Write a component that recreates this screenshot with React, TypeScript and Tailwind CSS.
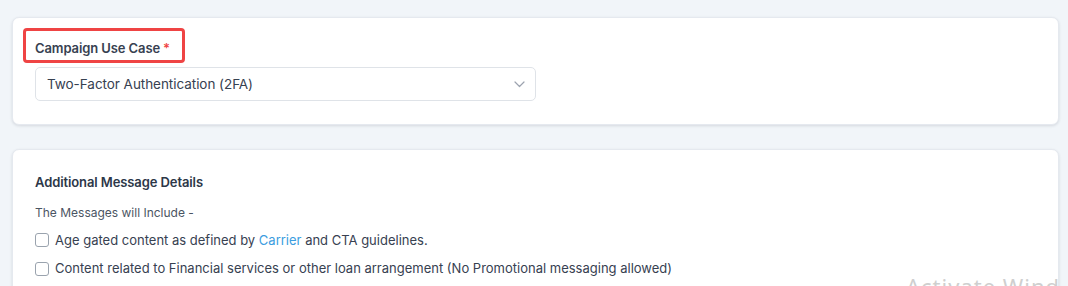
import React from "react";

export default function App() {
  return (
    <div
      className="relative w-[1068px] h-[286px] overflow-hidden bg-[#f1f5f9] pt-[17px] pl-[12px] pr-[9px]"
      style={{ fontFamily: "Inter, 'Noto Sans', sans-serif" }}
    >
      <div className="flex flex-col gap-[24px]">
        <div className="h-[108px] rounded-[7px] bg-white shadow-[0_1px_3px_rgba(15,23,42,0.12)] border border-[#e5e9ef] pt-[10px] pl-[10px]">
          <div className="inline-flex items-center w-[162px] h-[35px] rounded-[4px] border-[3px] border-[#ef4444] pl-[9px] pt-[7px]">
            <span className="text-[13px] font-semibold text-[#374151] tracking-[-0.1px]">
              Campaign Use Case
            </span>
            <span className="ml-[3px] text-[13px] text-[#ef4444] font-semibold">*</span>
          </div>
          <div className="mt-[4px] ml-[12px] w-[501px] h-[34px] rounded-[5px] border border-[#dfe3e8] flex items-center justify-between pl-[11px] pr-[10px]">
            <span className="text-[13.5px] text-[#374151] tracking-[-0.05px]">Two-Factor Authentication (2FA)</span>
            <svg width="11" height="7" viewBox="0 0 11 7" fill="none">
              <path d="M1 1l4.5 4.5L10 1" stroke="#9ca3af" strokeWidth="1.2" strokeLinecap="round" strokeLinejoin="round" />
            </svg>
          </div>
        </div>
        <div className="h-[200px] rounded-[7px] bg-white shadow-[0_1px_3px_rgba(15,23,42,0.12)] border border-[#e5e9ef] pt-[23px] pl-[22px]">
          <div className="text-[13px] font-semibold text-[#2d3748] tracking-[-0.1px]">Additional Message Details</div>
          <div className="mt-[11px] text-[12px] text-[#4b5563]">The Messages will Include -</div>
          <div className="mt-[9px] flex flex-col gap-[9px]">
            <label className="flex items-center gap-[6px]">
              <span className="w-[14px] h-[14px] rounded-[3px] border border-[#9aa3ae] bg-white" />
              <span className="text-[13px] text-[#374151]">
                Age gated content as defined by <span className="text-[#3b9de0]">Carrier</span> and CTA guidelines.
              </span>
            </label>
            <label className="flex items-center gap-[6px]">
              <span className="w-[14px] h-[14px] rounded-[3px] border border-[#9aa3ae] bg-white" />
              <span className="text-[13px] text-[#374151]">
                Content related to Financial services or other loan arrangement (No Promotional messaging allowed)
              </span>
            </label>
          </div>
        </div>
      </div>
      <div className="absolute left-[906px] top-[271px] w-[152px] h-[15px] overflow-hidden">
        <div className="text-[22px] leading-[30px] text-[#cfcfcf] tracking-[1px] whitespace-nowrap" style={{ fontFamily: "'Noto Sans', sans-serif" }}>
          Activate Windows
        </div>
      </div>
    </div>
  );
}
